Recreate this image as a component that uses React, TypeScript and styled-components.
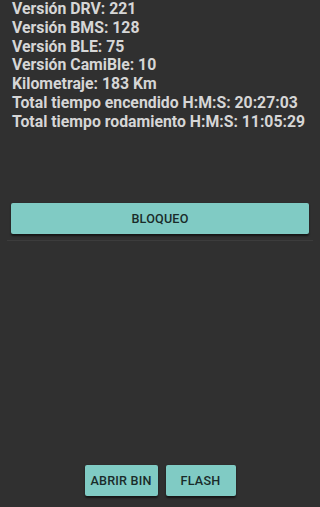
import React from "react";
import styled, { createGlobalStyle } from "styled-components";

const GlobalStyle = createGlobalStyle`
  html, body {
    margin: 0;
    padding: 0;
    background: #303030;
  }
  #root {
    height: 100vh;
  }
`;

const Screen = styled.div`
  display: flex;
  flex-direction: column;
  height: 507px;
  background: #303030;
  font-family: Roboto, "Liberation Sans", sans-serif;
  box-sizing: border-box;
  padding: 0 11px 11px;
`;

const InfoList = styled.div`
  display: flex;
  flex-direction: column;
  padding-left: 1px;
`;

const InfoLine = styled.div`
  font-size: 15.8px;
  font-weight: 700;
  line-height: 18.8px;
  color: #d6d6d6;
  white-space: nowrap;
`;

const Button = styled.button<{ $width?: number }>`
  height: 31px;
  width: ${(p) => (p.$width ? `${p.$width}px` : "100%")};
  border: none;
  border-radius: 2px;
  background: #80cbc4;
  color: #1a2b2a;
  font-family: Roboto, "Liberation Sans", sans-serif;
  font-size: 12.6px;
  font-weight: 500;
  letter-spacing: 0.2px;
  box-shadow: 0 1.5px 2px rgba(0, 0, 0, 0.55);
  padding: 0;
  cursor: pointer;
`;

const LockButton = styled(Button)`
  margin-top: 71px;
`;

const Divider = styled.div`
  height: 1px;
  margin: 6px -4px 0;
  background: #3c3c3c;
`;

const Spacer = styled.div`
  flex: 1;
`;

const BottomRow = styled.div`
  display: flex;
  justify-content: center;
  gap: 8px;
`;

const lines = [
  "Versión DRV: 221",
  "Versión BMS: 128",
  "Versión BLE: 75",
  "Versión CamiBle: 10",
  "Kilometraje: 183 Km",
  "Total tiempo encendido H:M:S: 20:27:03",
  "Total tiempo rodamiento H:M:S: 11:05:29",
];

const App = () => {
  return (
    <>
      <GlobalStyle />
      <Screen>
        <InfoList>
          {lines.map((l) => (
            <InfoLine key={l}>{l}</InfoLine>
          ))}
        </InfoList>
        <LockButton>BLOQUEO</LockButton>
        <Divider />
        <Spacer />
        <BottomRow>
          <Button $width={73}>ABRIR BIN</Button>
          <Button $width={70}>FLASH</Button>
        </BottomRow>
      </Screen>
    </>
  );
};

export default App;
